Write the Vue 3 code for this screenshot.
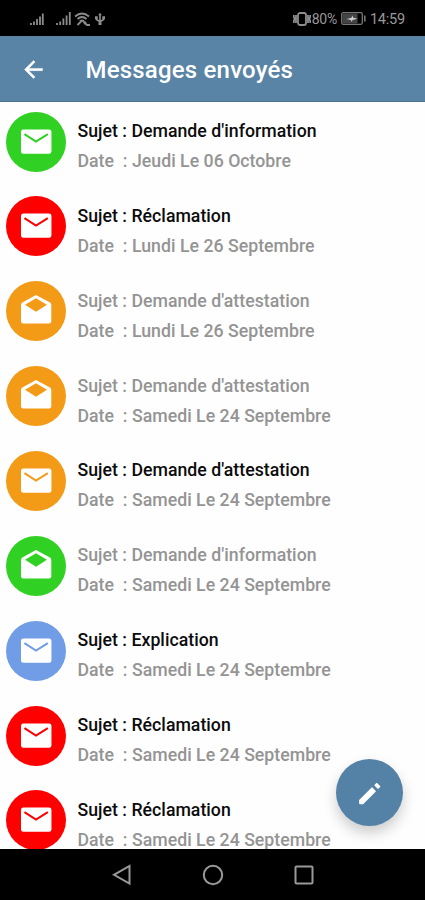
<template>
    <div class="phone">
        <div class="status-bar">
            <div class="status-left">
                <svg class="signal" width="14" height="14" viewBox="0 0 14 14">
                    <path d="M1 13v-2M4 13V9.5M7 13V7M10 13V4.5M12.8 13V1.5" />
                </svg>
                <svg class="signal large" width="15" height="14" viewBox="0 0 15 14">
                    <path d="M1 13v-2M4.2 13V9.5M7.4 13V6.5M10.6 13V3.5M13.8 13V0" />
                </svg>
                <svg class="wifi" width="17" height="14" viewBox="0 0 17 14">
                    <path d="M1 4.5Q8 -1.5 15 4.5M3.5 7Q8 3 12.5 7M6 9.5Q8 7.5 10 9.5M3.5 13l4-4M9 9l4 4h3M10 12l2-2" />
                </svg>
                <svg class="usb" width="10" height="14" viewBox="0 0 11 14">
                    <path d="M5.5 2v10M1.5 5v2.5l4 2.5 4-2.5V5" />
                    <path class="solid" d="M5.5 0l2 3h-4zM0 4h3v3H0zM8 4h3v3H8zM3.8 10.5h3.4v3H3.8z" />
                </svg>
            </div>
            <div class="status-right">
                <svg class="vibrate" width="18" height="14" viewBox="0 0 18 14">
                    <rect x="5" y="1" width="8" height="12" rx="2" />
                    <path d="M3 3v8M15 3v8M.8 3v2l1 2-1 2v2M17.2 3v2l-1 2 1 2v2" />
                </svg>
                <span class="percent">80%</span>
                <svg class="battery" width="25" height="13" viewBox="0 0 25 13">
                    <rect class="body" x=".7" y=".7" width="20.6" height="11.6" rx="1.5" />
                    <path class="level" d="M1.5 1.5h15v10h-15z" />
                    <path class="cap" d="M23 3.5h1.6v6H23z" />
                    <path class="bolt" d="M5.5 7l5-1.2.8-2.3 1 2.3 4.2.9-5 1.4-.8 1.9-1-1.9z" />
                </svg>
                <span class="clock">14:59</span>
            </div>
        </div>

        <header class="toolbar">
            <svg class="back" width="27" height="27" viewBox="0 0 24 24">
                <path d="M20 11H7.83l5.59-5.59L12 4l-8 8 8 8 1.41-1.41L7.83 13H20v-2z" />
            </svg>
            <h1>Messages envoyés</h1>
        </header>

        <main class="list">
            <div v-for="(message, index) in messages" :key="index" class="message">
                <div class="avatar" :class="message.color">
                    <svg v-if="message.read" width="36" height="36" viewBox="0 0 24 24">
                        <path class="paper" d="M12 1.4L21 6.2Q22.2 6.9 22.2 8V18.9Q22.2 20.4 20.7 20.4H3.5Q2 20.4 2 18.9V8Q2 6.9 3.2 6.2z" />
                        <path class="opening" d="M12 3.5L19.3 7.9 12 12.5 4.7 7.9z" />
                    </svg>
                    <svg v-else width="36" height="36" viewBox="0 0 24 24">
                        <rect class="paper" x="2" y="3.6" width="20.3" height="16.3" rx="1.6" />
                        <path class="fold" d="M4.3 6.8L12 11.7l7.9-4.9" />
                    </svg>
                </div>
                <div class="infos">
                    <p class="sujet" :class="{ read: message.read }">Sujet : {{ message.sujet }}</p>
                    <p class="date">Date&nbsp; : {{ message.date }}</p>
                </div>
            </div>
        </main>

        <button class="fab">
            <svg width="30" height="30" viewBox="0 0 24 24">
                <path d="M4 17.8L13.6 8.2l2.4 2.4-9.6 9.6H4zM16.2 5.8l1.2-1.2 2.2 2.2L18.4 8z" />
            </svg>
        </button>

        <nav class="nav-bar">
            <svg width="20" height="22" viewBox="0 0 20 22">
                <path d="M17.5 2v17.5L2 10.8z" />
            </svg>
            <svg width="22" height="22" viewBox="0 0 22 22">
                <circle cx="11" cy="11" r="9.2" />
            </svg>
            <svg width="20" height="22" viewBox="0 0 20 22">
                <rect x="1.5" y="2.5" width="17" height="17" rx="1" />
            </svg>
        </nav>
    </div>
</template>

<script setup>
import { ref } from 'vue';

const messages = ref([
    { sujet: "Demande d'information", date: 'Jeudi Le 06 Octobre', color: 'green', read: false },
    { sujet: 'Réclamation', date: 'Lundi Le 26 Septembre', color: 'red', read: false },
    { sujet: "Demande d'attestation", date: 'Lundi Le 26 Septembre', color: 'orange', read: true },
    { sujet: "Demande d'attestation", date: 'Samedi Le 24 Septembre', color: 'orange', read: true },
    { sujet: "Demande d'attestation", date: 'Samedi Le 24 Septembre', color: 'orange', read: false },
    { sujet: "Demande d'information", date: 'Samedi Le 24 Septembre', color: 'green', read: true },
    { sujet: 'Explication', date: 'Samedi Le 24 Septembre', color: 'blue', read: false },
    { sujet: 'Réclamation', date: 'Samedi Le 24 Septembre', color: 'red', read: false },
    { sujet: 'Réclamation', date: 'Samedi Le 24 Septembre', color: 'red', read: false }
]);
</script>

<style>
body {
    margin: 0;
    background: #000;
}
</style>

<style scoped>
.phone {
    position: relative;
    display: flex;
    flex-direction: column;
    width: 425px;
    height: 900px;
    overflow: hidden;
    background: #fefefe;
    font-family: Roboto, sans-serif;
}

.status-bar {
    display: flex;
    justify-content: space-between;
    flex: none;
    box-sizing: border-box;
    height: 36px;
    padding: 1px 20px 0 30px;
    background: #000;
    color: #999;
}

.status-left,
.status-right {
    display: flex;
    align-items: center;
}

.status-left svg,
.vibrate {
    fill: none;
    stroke: #8c8c8c;
    stroke-width: 1.8;
}

.signal.large {
    margin-left: 12px;
}

.wifi {
    margin-left: 3px;
}

.usb {
    margin-left: 4px;
}

.usb .solid {
    fill: #8c8c8c;
    stroke: none;
}

.percent {
    margin-left: 1px;
    padding-top: 1px;
    font-size: 14px;
    letter-spacing: -0.3px;
}

.battery {
    margin-left: 4px;
}

.battery .body {
    fill: #000;
    stroke: #777;
    stroke-width: 1.3;
}

.battery .level {
    fill: #444;
}

.battery .cap {
    fill: #777;
}

.battery .bolt {
    fill: #ccc;
}

.clock {
    margin-left: 4px;
    padding-top: 1px;
    font-size: 14.5px;
    letter-spacing: -0.2px;
}

.toolbar {
    display: flex;
    align-items: center;
    flex: none;
    box-sizing: border-box;
    height: 66px;
    padding: 2px 0 0 20px;
    background: #5a84a6;
    border-bottom: 1px solid #4a7391;
}

.back {
    fill: #fff;
    stroke: #fff;
    stroke-width: 0.4;
}

.toolbar h1 {
    margin: 0 0 0 38.5px;
    color: #fff;
    font-size: 24px;
    font-weight: 500;
    letter-spacing: 0.2px;
}

.list {
    flex: 1;
    min-height: 0;
    padding-top: 9.6px;
    overflow: hidden;
}

.message {
    display: flex;
    height: 84.87px;
    padding-left: 6px;
}

.avatar {
    display: flex;
    align-items: center;
    justify-content: center;
    width: 60px;
    height: 60px;
    border-radius: 50%;
    background: currentColor;
}

.avatar .paper {
    fill: #fff;
}

.avatar .opening {
    fill: currentColor;
}

.avatar .fold {
    fill: none;
    stroke: currentColor;
    stroke-width: 1.4;
}

.green {
    color: #31d124;
}

.red {
    color: #fe0000;
}

.orange {
    color: #f39b17;
}

.blue {
    color: #709de6;
}

.infos {
    margin-left: 11.5px;
    padding-top: 4.4px;
}

.infos p {
    margin: 0;
    font-size: 17.7px;
    font-weight: 500;
    letter-spacing: 0.02px;
    line-height: 30px;
    white-space: nowrap;
}

.sujet {
    color: #0c0c0c;
}

.sujet.read,
.infos .date {
    color: #949494;
}

.fab {
    position: absolute;
    right: 22px;
    bottom: 74px;
    display: flex;
    align-items: center;
    justify-content: center;
    width: 67px;
    height: 67px;
    padding: 0;
    border: none;
    border-radius: 50%;
    background: #5482a7;
    box-shadow: 0 7px 14px rgba(0, 0, 0, 0.2);
}

.fab svg {
    fill: #fff;
    stroke: #fff;
    stroke-width: 1.4;
    stroke-linejoin: round;
}

.nav-bar {
    position: relative;
    display: flex;
    align-items: center;
    justify-content: center;
    gap: 70px;
    flex: none;
    height: 51px;
    background: #000;
}

.nav-bar svg {
    fill: none;
    stroke: #999;
    stroke-width: 2;
}
</style>
